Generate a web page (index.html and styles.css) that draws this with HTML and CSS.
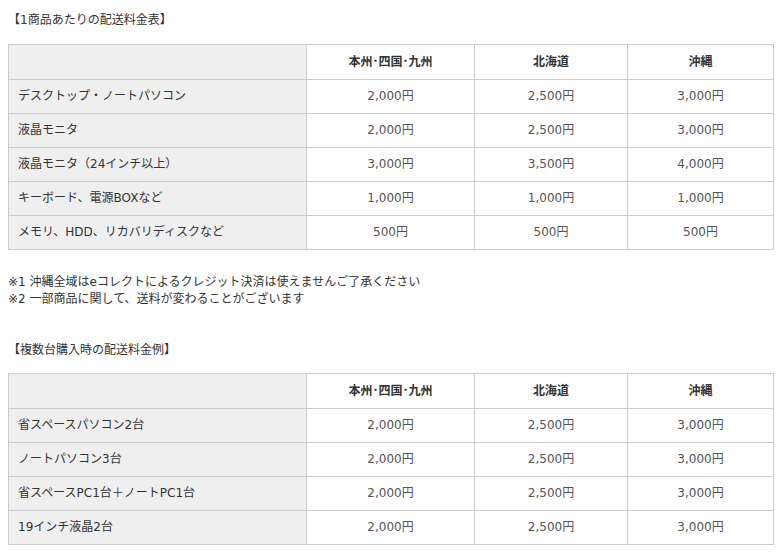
FILE: index.html
```html
<!DOCTYPE html>
<html lang="ja">
<head>
<meta charset="utf-8">
<title>配送料金表</title>
<link rel="stylesheet" href="styles.css">
</head>
<body>
<p class="title">【1商品あたりの配送料金表】</p>
<table class="fee">
  <colgroup><col class="c1"><col class="c2"><col class="c3"><col class="c4"></colgroup>
  <tr class="head"><th class="lbl"></th><th>本州･四国･九州</th><th>北海道</th><th>沖縄</th></tr>
  <tr><th class="lbl">デスクトップ・ノートパソコン</th><td>2,000円</td><td>2,500円</td><td>3,000円</td></tr>
  <tr><th class="lbl">液晶モニタ</th><td>2,000円</td><td>2,500円</td><td>3,000円</td></tr>
  <tr><th class="lbl">液晶モニタ（24インチ以上）</th><td>3,000円</td><td>3,500円</td><td>4,000円</td></tr>
  <tr><th class="lbl">キーボード、電源BOXなど</th><td>1,000円</td><td>1,000円</td><td>1,000円</td></tr>
  <tr><th class="lbl">メモリ、HDD、リカバリディスクなど</th><td>500円</td><td>500円</td><td>500円</td></tr>
</table>
<div class="notes">
  <p>※1 沖縄全域はeコレクトによるクレジット決済は使えませんご了承ください</p>
  <p>※2 一部商品に関して、送料が変わることがございます</p>
</div>
<p class="title second">【複数台購入時の配送料金例】</p>
<table class="fee">
  <colgroup><col class="c1"><col class="c2"><col class="c3"><col class="c4"></colgroup>
  <tr class="head"><th class="lbl"></th><th>本州･四国･九州</th><th>北海道</th><th>沖縄</th></tr>
  <tr><th class="lbl">省スペースパソコン2台</th><td>2,000円</td><td>2,500円</td><td>3,000円</td></tr>
  <tr><th class="lbl">ノートパソコン3台</th><td>2,000円</td><td>2,500円</td><td>3,000円</td></tr>
  <tr><th class="lbl">省スペースPC1台＋ノートPC1台</th><td>2,000円</td><td>2,500円</td><td>3,000円</td></tr>
  <tr><th class="lbl">19インチ液晶2台</th><td>2,000円</td><td>2,500円</td><td>3,000円</td></tr>
</table>
</body>
</html>
```

FILE: styles.css
```css
html, body {
  margin: 0;
  background: #fff;
}
body {
  padding: 8px;
  font-family: "DejaVu Sans", "Noto Sans CJK JP", sans-serif;
  font-size: 12px;
  color: #333;
  line-height: 17px;
}
p {
  margin: 0;
}
.title {
  margin: 4px 0 15px;
}
.title.second {
  margin: 34px 0 14px;
}
.fee {
  width: 765px;
  border-collapse: collapse;
  table-layout: fixed;
}
.c1 { width: 298px; }
.c2 { width: 168px; }
.c3 { width: 153px; }
.c4 { width: 146px; }
.fee th, .fee td {
  border: 1px solid #ccc;
  height: 33px;
  padding: 0;
  text-align: center;
  vertical-align: middle;
}
.fee tr.head th {
  height: 34px;
  font-weight: bold;
  color: #333;
}
.fee th.lbl {
  background: #efefef;
  text-align: left;
  font-weight: normal;
  padding-left: 9px;
}
.fee td {
  color: #555;
}
.notes {
  margin-top: 24px;
}
```
